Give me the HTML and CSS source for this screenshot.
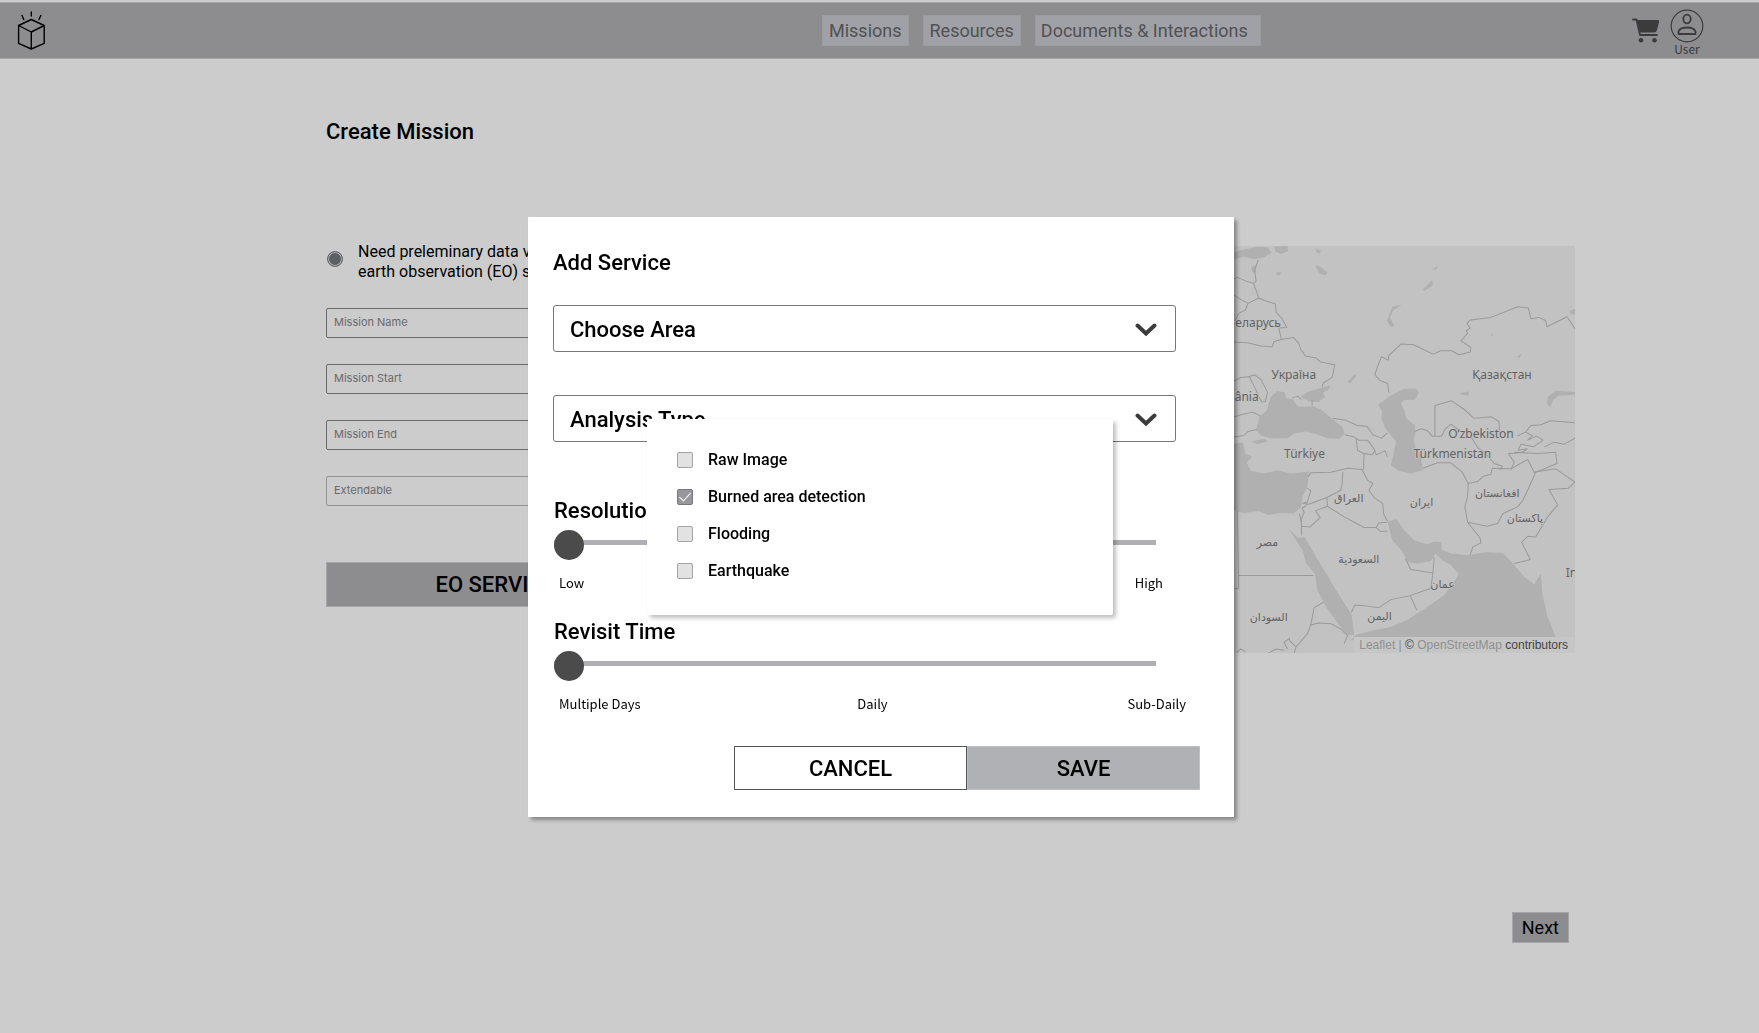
FILE: index.html
```html
<!DOCTYPE html>
<html lang="en">
<head>
<meta charset="utf-8">
<title>Create Mission</title>
<link rel="stylesheet" href="styles.css">
</head>
<body>
<header class="topbar">
  <a class="logo" href="#" aria-label="Home">
    <svg width="28" height="40" viewBox="0 0 28 40" fill="none" stroke="#000" stroke-width="1.4" stroke-linejoin="round" stroke-linecap="round">
      <path d="M14.300 8.500 27.200 14.500V32.300L14.300 38 1.600 32.300V14.500ZM1.600 14.500 14.300 21 27.200 14.500M14.300 21V38M14.300 1V5M5 4.500 6.800 8.500M23.800 4.500 22 8.500"/>
    </svg>
  </a>
  <nav class="nav">
    <a href="#">Missions</a>
    <a href="#">Resources</a>
    <a class="nav-wide" href="#">Documents &amp; Interactions</a>
  </nav>
  <div class="account">
    <a class="cart" href="#" aria-label="Cart">
      <svg width="28" height="26" viewBox="0 0 28 26">
        <path d="M1 1.500H4.500L8 17H25" fill="none" stroke="#4a4a4a" stroke-width="1.800" stroke-linecap="round" stroke-linejoin="round"/>
        <path d="M5 2H26Q27.500 2 27 4L25 12Q24.500 14.500 22 14.500H8Z" fill="#4a4a4a"/>
        <circle cx="9" cy="22.300" r="2.300" fill="#4a4a4a"/><circle cx="22.500" cy="22.300" r="2.300" fill="#4a4a4a"/>
      </svg>
    </a>
    <a class="user" href="#">
      <svg width="34" height="34" viewBox="0 0 34 34" fill="none" stroke="#4a4a50">
        <circle cx="17" cy="17" r="15.800" stroke-width="1.200"/>
        <ellipse cx="17" cy="10" rx="3.700" ry="4.300" stroke-width="1.800"/>
        <path d="M8.500 25V22.500Q10 18.500 17 18.500T25.500 22.500V25Z" stroke-width="1.800" stroke-linejoin="round"/>
      </svg>
      <span>User</span>
    </a>
  </div>
</header>

<main class="page">
  <h1>Create Mission</h1>
  <div class="columns">
    <form class="form" id="mission">
      <label class="option"><input type="radio" name="source" checked><span>Need preleminary data via<br>earth observation (EO) services</span></label>
      <input class="field" type="text" placeholder="Mission Name" aria-label="Mission Name">
      <input class="field" type="text" placeholder="Mission Start" aria-label="Mission Start">
      <input class="field" type="text" placeholder="Mission End" aria-label="Mission End">
      <input class="field field-light" type="text" placeholder="Extendable" aria-label="Extendable">
      <button class="eo" type="button">EO SERVICES</button>
    </form>
    <div class="map">
      <svg class="map-art" viewBox="0 18 1032 1220" preserveAspectRatio="xMaxYMid meet" role="img" aria-label="Map of the Middle East and Central Asia">
        <g class="water">
          <path d="M0 42 30 30 80 20 110 22 122 38 100 52 70 58 40 50 0 60ZM130 20 170 18 172 34 150 42 134 34ZM62 80 74 76 76 98 64 96ZM255 28 270 30 268 40 257 38ZM252 76 270 80 290 98 284 106 268 102ZM136 98 150 96 148 106 138 106Z"/>
          <path d="M472 232 484 200 512 194 486 212 478 234 490 256 482 262 468 242ZM350 425 372 402 376 408 358 430ZM605 88 620 78 618 88ZM574 150 604 120 606 136 582 152ZM684 460 714 454 712 468ZM858 350 872 340 866 354ZM778 286 784 278 786 286Z"/>
          <path d="M76 570 86 530 108 510 120 470 140 452 162 458 166 474 186 478 200 498 222 500 248 498 270 508 300 532 334 560 342 580 326 596 290 594 258 582 224 574 190 580 170 594 120 594 90 586ZM210 470 230 456 262 446 298 436 294 448 276 458 284 470 262 486 236 484Z"/>
          <path d="M442 494 480 466 520 446 556 446 564 458 552 478 520 480 510 490 520 508 526 534 552 556 554 580 548 600 556 630 570 650 576 690 540 700 504 692 480 676 490 630 496 604 478 582 462 562 452 536 454 514Z"/>
          <path d="M0 612 36 606 44 640 64 650 48 668 60 692 100 700 140 690 180 700 234 694 230 740 214 772 210 800 190 820 150 818 112 824 84 812 40 818 0 810Z"/>
          <path d="M162 848 174 866 204 894 222 890 256 950 280 990 310 1040 340 1088 362 1120 370 1184 350 1184 322 1150 286 1100 260 1050 252 1000 226 970 216 930Z"/>
          <path d="M470 844 496 836 520 870 550 900 590 912 610 904 632 906 632 928 660 940 710 944 770 936 816 938 846 970 880 1010 910 1032 930 1000 934 1060 950 1130 974 1190 968 1200 360 1200 374 1184 430 1170 480 1160 530 1138 580 1106 640 1064 668 1026 684 1002 660 974 634 960 614 940 600 962 560 970 530 966 512 930 484 900Z"/>
          <path d="M948 492 950 470 976 452 1032 456V464L984 466 966 480 958 500ZM1016 212 1032 206V224L1020 222ZM60 604 100 596 110 604 80 612Z"/>
        </g>
        <g class="borders">
          <path d="M82 60 72 90 76 124 68 130 48 124 20 112 0 120M68 130 76 150 84 174 52 190 30 178 0 160M84 174 104 182 134 192 136 216 154 236 168 262 144 264 152 298 130 304 124 320 90 318 50 308 0 306M52 190 44 210 24 220 12 244M152 298 188 292 204 310 210 328 224 348 256 354 270 366 312 374 304 412 278 428 274 440"/>
          <path d="M0 428 30 412 56 410 76 450 84 470 94 486 104 484 110 456 92 420 72 404 54 410M0 534 30 524 66 516 90 528M0 592 40 586 52 574 78 568M184 474 200 468 212 478M244 480V496M306 534 344 540 380 556 408 558 426 584 452 594 470 578M342 584 370 590 384 600 410 600 430 626 436 644 462 632 470 650M376 596 380 630 398 640"/>
          <path d="M474 458 470 430 446 420 432 404 440 380 452 350 472 360 474 346 510 312 548 314 606 342 630 332 662 332 684 344 718 336 720 322 690 302 710 280 706 272 718 264 708 250 718 240 780 232 860 200 892 204 900 236 924 232 944 242 948 260 1008 230 1032 266M612 588V496L662 482 700 508 728 534 782 530 804 544 806 578M550 574 572 566 590 572 604 588 632 588 642 568 660 552 690 574M720 590 742 624 764 640 790 670 814 678 808 690"/>
          <path d="M858 588 884 576 900 556 930 554 958 542 1032 548M884 576 904 586 890 600 916 588 936 600 908 620 870 612 862 630 890 626M940 620 970 606 1000 612 1032 594M832 640 870 638 890 626M832 640 850 666 840 688M850 636 920 640 974 636 978 670 914 696"/>
          <path d="M576 684 620 668 660 668 694 696 712 730 740 724 758 708 780 702 784 684 840 686 890 658 910 696 974 686 1000 704 1032 726 1012 744 954 748 980 794 950 830 932 860 914 890 890 888 872 906 898 958 850 970M914 696 890 750 876 780 860 800 816 820 800 850 768 858 710 846 702 800 710 770 712 730M710 846 748 894 750 908 726 920 718 944"/>
          <path d="M232 710 240 698 300 696 350 684 394 688 410 720 426 730 414 750 430 772 456 790 458 820 470 844M336 696 334 730 330 750 288 772 234 792 220 790M288 772 290 798 254 812 268 832 238 860 212 858M290 798 340 830 400 862 436 862 444 848 468 846M436 862 450 874 470 872M230 744 240 752 226 796 214 804 220 816 212 836 212 886M214 790 226 786M206 820 212 850"/>
          <path d="M20 812 24 1044 10 1046M24 1006 H248M362 1116 372 1094 400 1096 444 1102 480 1078 538 1066 600 1044 606 998 540 988 524 956M606 998 610 950M538 1066 558 1110M278 1086 250 1102 240 1154 262 1148 300 1150 330 1166 350 1186 340 1210M240 1154 230 1180 196 1220 176 1200 176 1194 160 1206 170 1226M196 1220 190 1238M18 1236 30 1226 44 1234M114 1238 136 1226 160 1230M398 688 400 640 424 644 432 632"/>
        </g>
        <g class="labels">
          <text x="14" y="261">еларусь</text>
          <text x="122" y="416">Україна</text>
          <text x="12" y="482">ânia</text>
          <text x="724" y="416">Қазақстан</text>
          <text x="652" y="595">O‘zbekiston</text>
          <text x="160" y="654">Türkiye</text>
          <text x="548" y="654">Türkmenistan</text>
          <text x="1004" y="1010">In</text>
          <g class="labels-arabic">
            <text x="354" y="785">العراق</text>
            <text x="572" y="798">ايران</text>
            <text x="799" y="769">افغانستان</text>
            <text x="882" y="846">پاکستان</text>
            <text x="110" y="916">مصر</text>
            <text x="384" y="969">السعودية</text>
            <text x="635" y="1044">عمان</text>
            <text x="446" y="1140">اليمن</text>
            <text x="114" y="1142">السودان</text>
          </g>
        </g>
      </svg>
      <p class="credit"><a href="#">Leaflet</a> | <span>©</span> <a href="#">OpenStreetMap</a> <span>contributors</span></p>
    </div>
  </div>
  <button class="next" type="submit" form="mission">Next</button>
</main>

<div class="scrim">
  <section class="dialog" role="dialog" aria-modal="true" aria-labelledby="dialog-title">
    <h2 id="dialog-title">Add Service</h2>
    <div class="picker">
      <select aria-label="Choose Area"><option>Choose Area</option></select>
      <svg class="chevron" width="22" height="14" viewBox="0 0 22 14"><path d="M2.500 2.500 11 10.500 19.500 2.500"/></svg>
    </div>
    <div class="picker picker-open">
      <select aria-label="Analysis Type"><option>Analysis Type</option></select>
      <svg class="chevron" width="22" height="14" viewBox="0 0 22 14"><path d="M2.500 2.500 11 10.500 19.500 2.500"/></svg>
      <div class="menu">
        <label><input type="checkbox">Raw Image</label>
        <label><input type="checkbox" checked>Burned area detection</label>
        <label><input type="checkbox">Flooding</label>
        <label><input type="checkbox">Earthquake</label>
      </div>
    </div>
    <div class="slider">
      <label for="resolution">Resolution</label>
      <input id="resolution" type="range" min="0" max="100" value="0">
      <div class="scale scale-ends"><span>Low</span><span>High</span></div>
    </div>
    <div class="slider">
      <label for="revisit">Revisit Time</label>
      <input id="revisit" type="range" min="0" max="2" value="0">
      <div class="scale"><span>Multiple Days</span><span>Daily</span><span>Sub-Daily</span></div>
    </div>
    <div class="actions">
      <button class="cancel" type="button">CANCEL</button>
      <button class="save" type="button">SAVE</button>
    </div>
  </section>
</div>
</body>
</html>
```
FILE: styles.css
```css
* { box-sizing: border-box; }

body {
  margin: 0;
  min-height: 100vh;
  padding-top: 2px;
  background: #fff;
  color: #000;
  font-family: Roboto, "Liberation Sans", sans-serif;
  font-size: 16px;
}

h1, h2, p { margin: 0; }
a { color: inherit; text-decoration: none; }
button, input, select { font-family: inherit; color: inherit; }
svg { display: block; }

h1, h2, .slider label {
  display: block;
  font-size: 22px;
  line-height: 26px;
  font-weight: 500;
}

/* Top bar */
.topbar {
  display: flex;
  align-items: center;
  height: 57px;
  padding: 0 55px 0 17px;
  background: #b1b1b3;
  border-top: 1px solid #cfcfd0;
  border-bottom: 1px solid #cfcfd0;
}

.logo { width: 31px; }

.nav {
  display: flex;
  gap: 14px;
  margin-left: 44vw;
}

.nav a {
  padding: 0 6px;
  border: 1px solid #c4c5ca;
  background: #c9cad0;
  color: #65666a;
  font-size: 18px;
  line-height: 29px;
  white-space: nowrap;
}

.nav .nav-wide { padding: 0 12px 0 5px; }

.account {
  display: flex;
  gap: 10px;
  margin-left: auto;
}

.cart { padding-top: 11px; }

.user {
  display: flex;
  flex-direction: column;
  align-items: center;
  padding-top: 2px;
  color: #4a4a50;
  font-family: "Noto Sans CJK SC", "Noto Sans", sans-serif;
  font-size: 12px;
  line-height: 11px;
}

/* Page */
.page {
  display: flex;
  flex-direction: column;
  padding: 60px 184px 0 326px;
}

.columns {
  display: grid;
  grid-template-columns: minmax(0, 352px) minmax(0, 1fr);
  gap: 100px;
  margin-top: 97px;
}

.form {
  display: flex;
  flex-direction: column;
}

.option {
  display: flex;
  align-items: flex-start;
  gap: 15px;
  margin-bottom: 26px;
  line-height: 20px;
  white-space: nowrap;
}

.option input {
  appearance: none;
  width: 16px;
  height: 16px;
  margin: 9px 0 0 1px;
  border: 1px solid #84848a;
  border-radius: 50%;
  background: #76777c;
  box-shadow: inset 0 0 0 1px #e0e0e2;
}

.field {
  height: 30px;
  margin-bottom: 26px;
  padding: 0 7px 3px;
  border: 1px solid #84848a;
  border-radius: 2px;
  background: transparent;
  font-family: Inter, sans-serif;
  font-size: 11px;
}

.field::placeholder { color: #85858a; opacity: 1; }
.field-light { border-color: #b8b8bb; }

.eo {
  height: 45px;
  margin-top: 30px;
  border: 1px solid #d0d0d2;
  background: #b1b1b3;
  font-size: 22px;
  font-weight: 500;
}

.map {
  position: relative;
  height: 407px;
  margin-top: 4px;
  background: #f3f3f3;
}

.map-art { width: 100%; height: 100%; }
.water { fill: #dcdcdc; }
.borders { fill: none; stroke: #c0c0c0; stroke-width: 3; stroke-linejoin: round; }
.labels {
  fill: #7c7c7c;
  stroke: #f3f3f3;
  stroke-width: 5;
  paint-order: stroke;
  font-family: "Noto Sans", "DejaVu Sans", sans-serif;
  font-size: 36px;
}

.labels-arabic { font-size: 33px; text-anchor: middle; }

.credit {
  position: absolute;
  right: 0;
  bottom: 0;
  padding: 0 7px 0 5px;
  background: #f8f8f8;
  color: #b5b5b5;
  font-family: "Liberation Sans", sans-serif;
  font-size: 12px;
  line-height: 16px;
}

.credit span { color: #555; }

.next {
  align-self: flex-end;
  height: 31px;
  margin: 259px 6px 0 0;
  padding: 0 9px;
  border: 1px solid #d0d0d2;
  background: #b1b1b3;
  font-size: 18px;
}

/* Dialog */
.scrim {
  position: fixed;
  inset: 0;
  display: flex;
  align-items: center;
  justify-content: center;
  padding-left: 3px;
  background: rgba(0, 0, 0, 0.2);
}

.dialog {
  width: 706px;
  padding: 33px 25px 27px;
  background: #fff;
  box-shadow: 3px 3px 4px rgba(0, 0, 0, 0.35);
}

.picker {
  position: relative;
  margin: 29px 33px 0 0;
}

.picker-open { margin-top: 43px; }

.picker select {
  appearance: none;
  display: block;
  width: 100%;
  height: 47px;
  padding: 2px 16px 0;
  border: 1px solid #77777a;
  border-radius: 3px;
  background: #fff;
  font-size: 22px;
  font-weight: 500;
}

.chevron {
  position: absolute;
  top: 18px;
  right: 19px;
  fill: none;
  stroke: #3c3c3c;
  stroke-width: 4;
  stroke-linecap: round;
  stroke-linejoin: miter;
  pointer-events: none;
}

.menu {
  position: absolute;
  z-index: 1;
  top: 24px;
  left: 94px;
  display: flex;
  flex-direction: column;
  gap: 17px;
  width: 466px;
  height: 196px;
  padding: 31px 30px;
  border-radius: 2px;
  background: #fff;
  box-shadow: 3px 3px 4px rgba(0, 0, 0, 0.25);
}

.menu label {
  display: flex;
  align-items: center;
  gap: 15px;
  font-weight: 500;
  line-height: 20px;
}

.menu input {
  appearance: none;
  display: grid;
  place-items: center;
  width: 16px;
  height: 16px;
  margin: 0;
  border: 1px solid #a2a2a8;
  border-radius: 2px;
  background: #e2e2e3;
}

.menu input:checked { border-color: #77777d; background: #98989b; }

.menu input:checked::before {
  content: "";
  width: 5px;
  height: 10px;
  margin-bottom: 3px;
  border: solid #fff;
  border-width: 0 1px 1px 0;
  transform: rotate(42deg);
}

.slider { margin: 26px 0 0 1px; }
.picker-open + .slider { margin-top: 56px; }

.slider input {
  appearance: none;
  display: block;
  width: calc(100% - 53px);
  height: 30px;
  margin: 4px 0 15px;
  background: none;
}

.slider input::-webkit-slider-runnable-track { height: 5px; background: #b0b0b4; }

.slider input::-webkit-slider-thumb {
  appearance: none;
  width: 30px;
  height: 30px;
  margin-top: -10px;
  border-radius: 50%;
  background: #4b4b4b;
}

.scale {
  display: grid;
  grid-template-columns: repeat(3, 1fr);
  padding: 0 23px 0 5px;
  font-family: "Noto Sans CJK SC", "Noto Sans", sans-serif;
  font-size: 13px;
  line-height: 20px;
  text-align: center;
}

.scale span:first-child { text-align: left; }
.scale span:last-child { text-align: right; }
.scale-ends { grid-template-columns: 1fr 1fr; padding-right: 46px; }

.actions {
  display: flex;
  justify-content: flex-end;
  margin: 32px 9px 0 0;
}

.actions button {
  width: 233px;
  height: 44px;
  padding: 2px 0 0;
  font-size: 22px;
  font-weight: 500;
}

.cancel { border: 1px solid #55555a; background: #fff; }
.save { border: 1px solid #c0c0c4; background: #b0b1b5; }
```
